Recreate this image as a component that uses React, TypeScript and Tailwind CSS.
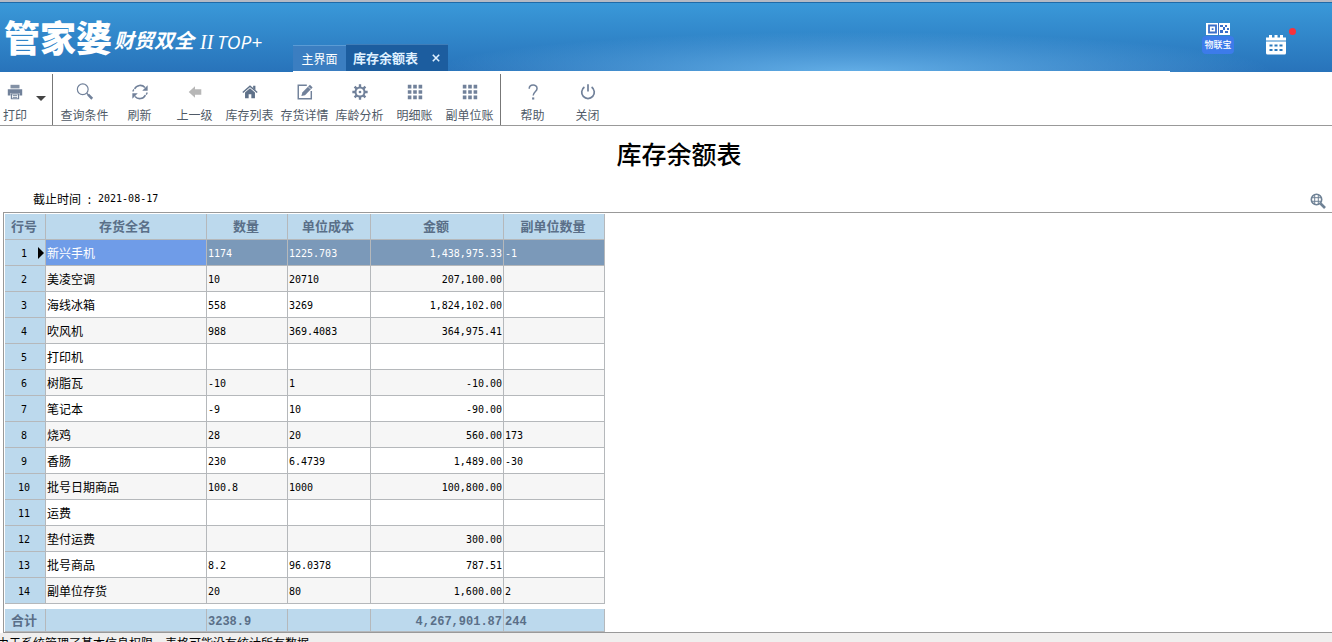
import type { ReactNode } from 'react';

type Row = [string, string, string, string, string];

const rows: Row[] = [
  ['新兴手机', '1174', '1225.703', '1,438,975.33', '-1'],
  ['美凌空调', '10', '20710', '207,100.00', ''],
  ['海线冰箱', '558', '3269', '1,824,102.00', ''],
  ['吹风机', '988', '369.4083', '364,975.41', ''],
  ['打印机', '', '', '', ''],
  ['树脂瓦', '-10', '1', '-10.00', ''],
  ['笔记本', '-9', '10', '-90.00', ''],
  ['烧鸡', '28', '20', '560.00', '173'],
  ['香肠', '230', '6.4739', '1,489.00', '-30'],
  ['批号日期商品', '100.8', '1000', '100,800.00', ''],
  ['运费', '', '', '', ''],
  ['垫付运费', '', '', '300.00', ''],
  ['批号商品', '8.2', '96.0378', '787.51', ''],
  ['副单位存货', '20', '80', '1,600.00', '2'],
];

const headings = ['行号', '存货全名', '数量', '单位成本', '金额', '副单位数量'];

function Icon({ children }: { children: ReactNode }) {
  return (
    <svg viewBox="0 0 20 20" className="h-5 w-5" fill="none" stroke="#71819a" aria-hidden="true">
      {children}
    </svg>
  );
}

const gridIcon = (
  <Icon>
    <path
      stroke="none"
      fill="#71819a"
      d="M2 2h4v4H2zM8 2h4v4H8zM14 2h4v4h-4zM2 8h4v4H2zM8 8h4v4H8zM14 8h4v4h-4zM2 14h4v4H2zM8 14h4v4H8zM14 14h4v4h-4z"
    />
  </Icon>
);

const mainTools: { label: string; icon: ReactNode }[] = [
  {
    label: '查询条件',
    icon: (
      <Icon>
        <circle cx="7.500" cy="7" r="6" strokeWidth="1.300" />
        <path d="M12 11.500l2 2" strokeWidth="1.500" />
        <path d="M13.500 13l4.500 4.500" strokeWidth="2.800" />
      </Icon>
    ),
  },
  {
    label: '刷新',
    icon: (
      <Icon>
        <path d="M4 6.500A7 7 0 0 1 15.500 5M16 13.500A7 7 0 0 1 4.500 15" strokeWidth="1.700" />
        <path d="M2 9.500A8 8 0 0 1 3.200 7M18 10.500a8 8 0 0 1-1.200 2.500" strokeWidth="1.500" />
        <path d="M18.500 2.500v6h-6zM1.500 17.500v-6h6z" fill="#71819a" stroke="none" />
      </Icon>
    ),
  },
  {
    label: '上一级',
    icon: (
      <Icon>
        <path d="M3 10l7-6.500V7h7v6h-7v3.500z" fill="#b7b7b7" stroke="none" />
      </Icon>
    ),
  },
  {
    label: '库存列表',
    icon: (
      <Icon>
        <path d="M4.500 10.500L10 5.800l5.500 4.700V17h-4v-4.500h-3V17h-4z" fill="#5f7189" stroke="none" />
        <path d="M2 10.500l8-7 8 7" stroke="#5f7189" strokeWidth="1.600" />
        <path d="M13.500 3h2.500v5l-2.500-2.200z" fill="#5f7189" stroke="none" />
      </Icon>
    ),
  },
  {
    label: '存货详情',
    icon: (
      <Icon>
        <path d="M12 2.500H2.500v15H17V9" strokeWidth="1.600" />
        <path d="M6 14.500l1-4L15.500 2l3 3-8.500 8.500z" fill="#71819a" stroke="none" />
        <path d="M13.500 4l3 3" stroke="#fff" strokeWidth="0.800" />
      </Icon>
    ),
  },
  {
    label: '库龄分析',
    icon: (
      <Icon>
        <circle cx="10" cy="10" r="5" strokeWidth="2.200" />
        <circle cx="10" cy="10" r="1.500" fill="#71819a" stroke="none" />
        <path
          d="M10 1.500v3M10 15.500v3M1.500 10h3M15.500 10h3M4 4l2.200 2.200M13.800 13.800L16 16M4 16l2.200-2.200M13.800 6.200L16 4"
          strokeWidth="2.600"
        />
      </Icon>
    ),
  },
  { label: '明细账', icon: gridIcon },
  { label: '副单位账', icon: gridIcon },
];

const sideTools: { label: string; icon: ReactNode }[] = [
  {
    label: '帮助',
    icon: (
      <Icon>
        <path d="M5.800 6.500C5.800 1 14.500 1 14.500 6c0 3.500-4.300 4-4.300 8" strokeWidth="1.700" />
        <path d="M9 16h2.400v2.400H9z" fill="#71819a" stroke="none" />
      </Icon>
    ),
  },
  {
    label: '关闭',
    icon: (
      <Icon>
        <path d="M6 4.500a7 7 0 1 0 8 0" strokeWidth="1.900" />
        <path d="M10 1.500v8" strokeWidth="1.900" />
      </Icon>
    ),
  },
];

function Tool({ label, icon }: { label: string; icon: ReactNode }) {
  return (
    <button type="button" className="flex w-[55px] flex-col items-center gap-1 pt-[11px] text-xs text-[#4f5a67]">
      {icon}
      <span className="whitespace-nowrap leading-5">{label}</span>
    </button>
  );
}

function Header() {
  return (
    <header className="flex h-[72px] shrink-0 items-stretch border-t-2 border-[#b4b9c4] bg-linear-to-b from-[#3a99d9] to-[#2873ba] text-white">
      <div className="flex grow items-stretch border-t border-[#1f6aa8] bg-[radial-gradient(ellipse_420px_40px_at_64%_100%,#63aee6,transparent)]">
        <div className="flex w-[293px] shrink-0 items-start whitespace-nowrap pl-1 pt-[13px]">
          <h1 className="flex items-end">
            <span className="text-[36px] font-black leading-10">管家婆</span>
            <span className="pl-0.5 text-[20px] font-bold italic leading-8">财贸双全</span>
            <span className="pl-1.5 font-['Liberation_Serif'] text-[20px] italic leading-7">II</span>
            <span className="pl-1 font-['Open_Sans'] text-[19px] italic leading-7">TOP+</span>
          </h1>
        </div>
        <nav className="flex grow items-end border-b border-white text-xs">
          <a href="#main" className="flex h-[26px] w-[53px] items-center justify-center border-t border-[#5b9bd4] bg-[#3b7ec1]">
            主界面
          </a>
          <div className="flex h-[27px] w-[102px] items-center justify-between border-t border-[#3f7db8] bg-[#1c5d9f] pl-[7px] pr-1.5 text-[13px] font-bold text-[#dff0ff]">
            <a href="#stock">库存余额表</a>
            <button type="button" aria-label="关闭标签" className="flex h-3 w-3 items-center justify-center">
              <svg viewBox="0 0 10 10" className="h-2 w-2.5" stroke="currentColor" strokeWidth="2">
                <path d="M1 1l8 8M9 1l-8 8" />
              </svg>
            </button>
          </div>
        </nav>
        <div className="flex items-start gap-8 pl-8 pr-[46px] pt-[19px]">
          <button type="button" className="flex w-8 flex-col items-center text-[9px] leading-4">
            <svg viewBox="0 0 24 14" className="h-3.5 w-6" aria-hidden="true">
              <path d="M0 1h24v12H0z" fill="#fff" />
              <path d="M3 3.500h7v7H3z" fill="none" stroke="#3a6fc9" strokeWidth="1.800" />
              <path
                d="M5.700 6.200h1.800v1.800H5.700zM12 1h1v12h-1zM14 3h3v2h-3zM17 5h2v3h-2zM19 3h2v2h-2zM14 8h3v3h-3zM19 9h3v2h-3zM21 6h2v2h-2z"
                fill="#3a6fc9"
              />
            </svg>
            <span className="h-[18px] w-8 rounded-sm bg-[#3c7bea] pt-px font-medium">物联宝</span>
          </button>
          <button type="button" aria-label="日历" className="relative mt-2.5 h-6 w-5">
            <svg viewBox="0 0 20 21" className="w-5" aria-hidden="true">
              <path d="M0 3.500h20v3H0zM3 1h3v3H3zM8.500 1h3v3h-3zM14 1h3v3h-3z" fill="#fff" />
              <path d="M0 7.500h20V19q0 1.500-1.500 1.500h-17Q0 20.500 0 19z" fill="#fff" />
              <path
                d="M3.500 10.500h3v2h-3zM8.500 10.500h3v2h-3zM13.500 10.500h3v2h-3zM3.500 15h3v2h-3zM8.500 15h3v2h-3zM13.500 15h3v2h-3z"
                fill="#2b79bd"
              />
            </svg>
            <span className="absolute -right-2.5 -top-1 h-[7px] w-[7px] rounded-full bg-[#f8323c]" />
          </button>
        </div>
      </div>
    </header>
  );
}

function Toolbar() {
  return (
    <div role="toolbar" className="flex h-[54px] shrink-0 items-stretch border-b border-[#999] bg-white">
      <button type="button" className="flex w-[30px] flex-col items-center gap-1 pt-[11px] text-xs text-[#4f5a67]">
        <Icon>
          <path d="M5 2h10v4H5z" fill="#8391a5" stroke="none" />
          <path d="M2 7h16v7h-3v-3H5v3H2z" fill="#71819a" stroke="none" />
          <path d="M6 12h8v5.500H6z" strokeWidth="1.300" />
          <path d="M7.500 14h5M7.500 16h5" />
        </Icon>
        <span className="whitespace-nowrap leading-5">打印</span>
      </button>
      <button type="button" aria-label="打印选项" className="flex w-[22px] items-center justify-center">
        <svg viewBox="0 0 10 5" className="h-[5px] w-2.5" fill="#444">
          <path d="M0 0h10L5 5z" />
        </svg>
      </button>
      <div className="mr-1 mt-0.5 border-l border-[#777]" />
      {mainTools.map((tool) => (
        <Tool key={tool.label} {...tool} />
      ))}
      <div className="ml-[3px] mr-1 mt-0.5 border-l border-[#777]" />
      {sideTools.map((tool) => (
        <Tool key={tool.label} {...tool} />
      ))}
    </div>
  );
}

const monoFont = "font-['DejaVu_Sans_Mono','Noto_Sans_CJK_SC',monospace] text-[10px]";

function StockTable() {
  const line = 'border-r border-b border-[#b5b8bb]';
  return (
    <table className="w-[600px] table-fixed border-separate border-spacing-0 text-xs leading-4">
      <colgroup>
        <col className="w-[41px]" />
        <col className="w-[161px]" />
        <col className="w-[81px]" />
        <col className="w-[83px]" />
        <col className="w-[133px]" />
        <col className="w-[101px]" />
      </colgroup>
      <thead>
        <tr className="h-[26px] bg-[#bcd9ed] text-[13px] text-[#5a6f88]">
          {headings.map((heading) => (
            <th key={heading} scope="col" className={`${line} p-0 pb-0.5 pr-0.5 font-bold`}>
              {heading}
            </th>
          ))}
        </tr>
      </thead>
      <tbody>
        {rows.map(([name, count, cost, amount, extra], i) => {
          const selected = i === 0;
          const tone = selected ? 'bg-[#7b99b9] text-white' : i % 2 ? 'bg-[#f6f6f6]' : 'bg-white';
          return (
            <tr key={name} className={`h-[26px] ${tone}`} aria-selected={selected}>
              <th scope="row" className={`${line} ${monoFont} relative bg-[#bcd9ed] p-0 pr-0.5 pt-0.5 font-normal text-black`}>
                {i + 1}
                {selected && (
                  <svg viewBox="0 0 6 12" className="absolute right-px top-[7px] h-3 w-1.5" aria-hidden="true">
                    <path d="M0 0l6 6-6 6z" />
                  </svg>
                )}
              </th>
              <td className={`${line} p-0 pl-px ${selected ? 'bg-[#6f9ce8]' : ''}`}>{name}</td>
              <td className={`${line} ${monoFont} p-0 pl-px pt-0.5`}>{count}</td>
              <td className={`${line} ${monoFont} p-0 pl-px pt-0.5`}>{cost}</td>
              <td className={`${line} ${monoFont} p-0 pr-px pt-0.5 text-right`}>{amount}</td>
              <td className={`${line} ${monoFont} p-0 pl-px pt-0.5`}>{extra}</td>
            </tr>
          );
        })}
      </tbody>
      <tfoot>
        <tr className="h-[5px]" aria-hidden="true">
          <td colSpan={6} className="p-0" />
        </tr>
        <tr className="h-[23px] bg-[#bcd9ed] font-['Liberation_Mono','Noto_Sans_CJK_SC',monospace] font-bold text-[#5a6f88]">
          <th scope="row" className={`${line} p-0 pr-0.5 pt-1 text-[13px]`}>合计</th>
          <td className={`${line} p-0`} />
          <td className={`${line} p-0 pl-px pt-1`}>3238.9</td>
          <td className={`${line} p-0`} />
          <td className={`${line} p-0 pr-px pt-1 text-right`}>4,267,901.87</td>
          <td className={`${line} p-0 pl-px pt-1`}>244</td>
        </tr>
      </tfoot>
    </table>
  );
}

export default function App() {
  return (
    <div className="flex h-screen flex-col overflow-hidden bg-white font-['Noto_Sans_CJK_SC',sans-serif] text-black">
      <Header />
      <Toolbar />
      <main className="flex shrink-0 flex-col">
        <h2 className="pl-[26px] pt-[11px] text-center text-[25px] font-medium leading-8">库存余额表</h2>
        <div className="mt-[17px] flex h-[26px] items-center justify-between pl-[33px] pr-1.5 text-xs">
          <p className="flex items-center">
            <span>截止时间</span>
            <span className="w-[17px] text-center">:</span>
            <time dateTime="2021-08-17" className={monoFont}>2021-08-17</time>
          </p>
          <button type="button" aria-label="放大查询" className="pt-1">
            <svg viewBox="0 0 16 16" className="h-4 w-4" fill="none" stroke="#6f8296" aria-hidden="true">
              <circle cx="6.500" cy="6.500" r="5.200" strokeWidth="1.600" />
              <path d="M4.700 2v9M8.300 2v9M2 4.700h9M2 8.300h9" strokeWidth="1" />
              <path d="M10.500 10.500l4.500 4.500" strokeWidth="2.600" />
            </svg>
          </button>
        </div>
        <section className="ml-[3px] border-y border-l border-[#999] pl-px pt-px">
          <StockTable />
        </section>
      </main>
      <footer className="shrink-0 bg-[#f0efee] pt-px text-xs leading-[18px]">
        <p className="-ml-[3px] whitespace-nowrap">由于系统管理了基本信息权限，表格可能没有统计所有数据</p>
      </footer>
    </div>
  );
}
